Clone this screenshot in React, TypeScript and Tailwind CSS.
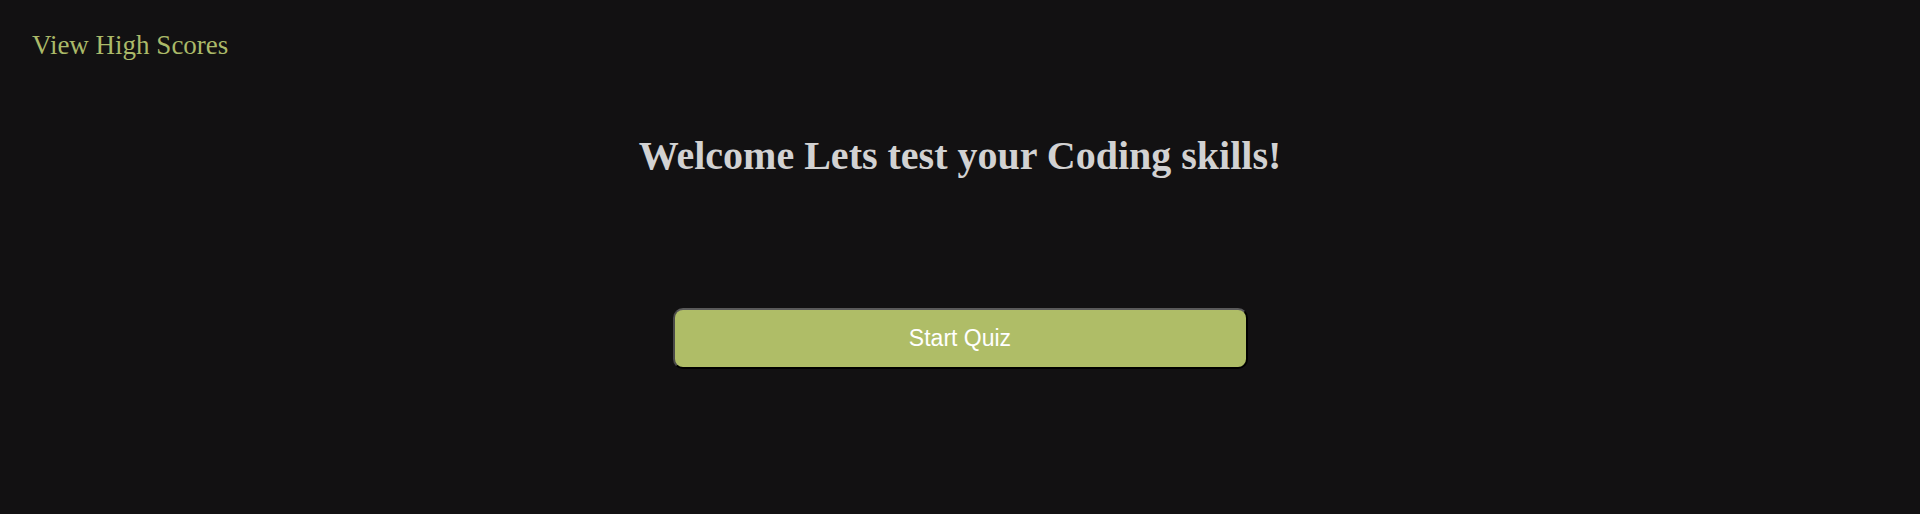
import React from "react";

const App: React.FC = () => {
    return (
        <div className="min-h-[514px] w-full bg-[#121112] font-['Liberation_Serif',serif]">
            <header className="px-8 pt-[32px]">
                <a className="block text-[27px] leading-none text-[#abba69] cursor-pointer">
                    View High Scores
                </a>
            </header>
            <main className="flex flex-col items-center">
                <h1 className="mt-[77px] text-[40px] font-bold leading-none text-[#d2d2d2]">
                    Welcome Lets test your Coding skills!
                </h1>
                <button className="mt-[132px] h-[61px] w-[575px] rounded-[10px] border-2 border-t-[#5a5a5a] border-l-[#4a4a4a] border-r-[#000] border-b-[#000] bg-[#afbd67] font-['Liberation_Sans',sans-serif] text-[23px] text-white">
                    Start Quiz
                </button>
            </main>
        </div>
    );
};

export default App;
